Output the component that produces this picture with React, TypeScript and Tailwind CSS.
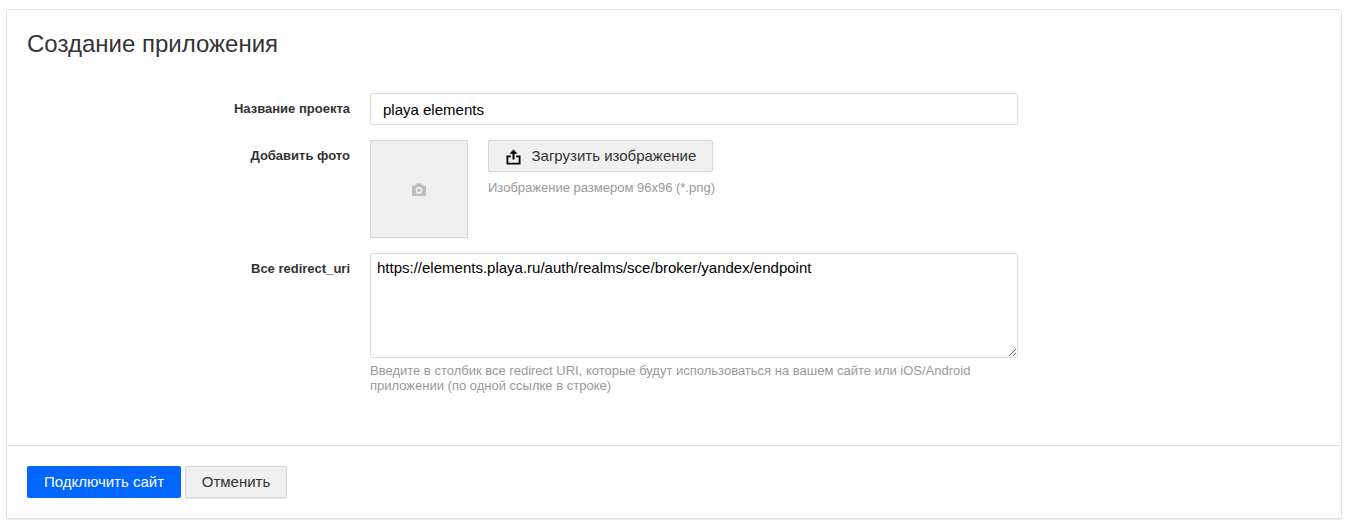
function Field({ label, className, children }: { label: string; className?: string; children: React.ReactNode }) {
  return (
    <div className={`flex ${className ?? ""}`}>
      <label className="w-[363px] pt-[8px] pr-[20px] text-right text-[13px] leading-[16px] font-bold text-[#333333]">
        {label}
      </label>
      <div className="w-[648px]">{children}</div>
    </div>
  )
}

export default function App() {
  return (
    <div className="h-[524px] bg-white pt-[9px] pr-[11px] pl-[6px] font-['Liberation_Sans',Arial,sans-serif]">
      <div className="h-[510px] rounded-[2px] border border-[#e2e2e2] bg-white shadow-[0_1px_1px_rgba(0,0,0,0.08)]">
        <h1 className="px-[20px] pt-[20px] text-[24px] leading-[28px] font-normal text-[#333333]">
          Создание приложения
        </h1>
        <div className="h-[387px] pt-[35px]">
          <Field label="Название проекта">
            <input
              readOnly
              value="playa elements"
              className="h-[32px] w-full rounded-[2px] border border-[#dddddd] px-[12px] text-[15px] text-black outline-none"
            />
          </Field>
          <Field label="Добавить фото" className="mt-[15px]">
            <div className="flex gap-[20px]">
              <div className="flex h-[98px] w-[98px] items-center justify-center border border-[#d4d4d4] bg-[#efefef]">
                <svg width="14" height="13" viewBox="0 0 14 13">
                  <path
                    d="M1.5 2.5 H3.5 L4.5 0.5 H9.5 L10.5 2.5 H12.5 Q14 2.5 14 4 V11.5 Q14 13 12.5 13 H1.5 Q0 13 0 11.5 V4 Q0 2.5 1.5 2.5 Z"
                    fill="#bdbdbd"
                  />
                  <circle cx="7" cy="7.5" r="3.4" fill="#efefef" />
                  <circle cx="7" cy="7.5" r="1.7" fill="#bdbdbd" />
                </svg>
              </div>
              <div>
                <button className="flex h-[32px] w-[225px] items-center rounded-[2px] border border-[#d6d6d6] bg-[#f0f0f0] pl-[17px] text-[15px] text-[#333333]">
                  <svg width="15" height="16" viewBox="0 0 15 16" className="mt-[2px] mr-[10.5px]">
                    <path d="M7.5 0.5 L11.5 4.8 H8.5 V10.5 H6.5 V4.8 H3.5 Z" fill="#000" />
                    <path d="M4.8 6.5 H0.5 V15.5 H14.5 V6.5 H10.2 V8.3 H12.7 V13.7 H2.3 V8.3 H4.8 Z" fill="#000" />
                  </svg>
                  Загрузить изображение
                </button>
                <p className="mt-[8px] text-[13px] leading-[16px] text-[#999999]">
                  Изображение размером 96x96 (*.png)
                </p>
              </div>
            </div>
          </Field>
          <Field label="Все redirect_uri" className="mt-[15px]">
            <textarea
              readOnly
              value="https://elements.playa.ru/auth/realms/sce/broker/yandex/endpoint"
              className="block h-[105px] w-full rounded-[2px] border border-[#dddddd] px-[6px] py-[5px] text-[15px] leading-[17px] text-black outline-none"
            />
            <p className="mt-[5px] text-[13px] leading-[15px] text-[#999999]">
              Введите в столбик все redirect URI, которые будут использоваться на вашем сайте или iOS/Android приложении
              (по одной ссылке в строке)
            </p>
          </Field>
        </div>
        <div className="flex gap-[4px] border-t border-[#e2e2e2] px-[20px] pt-[20px]">
          <button className="h-[32px] w-[154px] rounded-[2px] bg-[#0066ff] text-[15px] text-white">Подключить сайт</button>
          <button className="h-[32px] w-[102px] rounded-[2px] border border-[#d6d6d6] bg-[#f0f0f0] text-[15px] text-[#333333] shadow-[0_1px_1px_rgba(0,0,0,0.1)]">
            Отменить
          </button>
        </div>
      </div>
    </div>
  )
}
